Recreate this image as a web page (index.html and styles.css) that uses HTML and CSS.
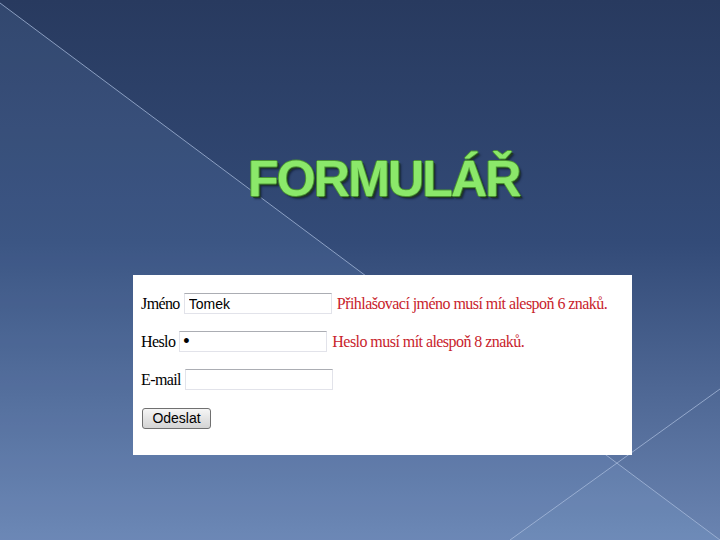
FILE: index.html
```html
<!DOCTYPE html>
<html lang="cs">
<head>
<meta charset="utf-8">
<title>Formulář</title>
<link rel="stylesheet" href="styles.css">
</head>
<body>
<svg class="backdrop" width="720" height="540" viewBox="0 0 720 540" aria-hidden="true">
  <defs>
    <linearGradient id="bg" x1="0" y1="0" x2="0" y2="1">
      <stop offset="0" stop-color="#283a5f"/>
      <stop offset="0.45" stop-color="#334b78"/>
      <stop offset="1" stop-color="#6a84b1"/>
    </linearGradient>
  </defs>
  <rect width="720" height="540" fill="url(#bg)"/>
  <polygon points="0,3 720,540 0,540" fill="#7f9fd6" fill-opacity="0.13"/>
  <polygon points="617,463 510,540 720,540" fill="#9fb8e0" fill-opacity="0.06"/>
  <line x1="0" y1="3" x2="720" y2="540" stroke="#a9bcdc" stroke-opacity="0.75" stroke-width="1"/>
  <line x1="720" y1="389" x2="510" y2="540" stroke="#a9bcdc" stroke-opacity="0.75" stroke-width="1"/>
</svg>
<main class="slide">
  <h1 class="title">FORMULÁŘ</h1>
  <form class="card">
    <div class="row">
      <label class="lbl" for="jmeno">Jméno</label>
      <input class="field" id="jmeno" type="text" value="Tomek">
      <span class="err">Přihlašovací jméno musí mít alespoň 6 znaků.</span>
    </div>
    <div class="row">
      <label class="lbl" for="heslo">Heslo</label>
      <input class="field pass" id="heslo" type="password" value="x">
      <span class="err">Heslo musí mít alespoň 8 znaků.</span>
    </div>
    <div class="row">
      <label class="lbl" for="email">E-mail</label>
      <input class="field" id="email" type="text" value="">
    </div>
    <div class="row">
      <button class="btn" type="button">Odeslat</button>
    </div>
  </form>
</main>
</body>
</html>
```

FILE: styles.css
```css
html, body {
  margin: 0;
  padding: 0;
  width: 720px;
  height: 540px;
  overflow: hidden;
}

body {
  position: relative;
  background: #3d5584;
  font-family: "Liberation Serif", "Times New Roman", serif;
}

.backdrop {
  position: absolute;
  left: 0;
  top: 0;
  z-index: 0;
}

.slide {
  position: relative;
  z-index: 1;
  padding: 151px 0 0 133px;
  display: flex;
  flex-direction: column;
}

.title {
  margin: 0 0 0 115px;
  height: 56px;
  line-height: 56px;
  font-family: "Liberation Sans", Arial, sans-serif;
  font-weight: bold;
  font-size: 50px;
  letter-spacing: -1.8px;
  color: #8be86a;
  text-shadow:
    -1px 0 0 #4a9433,
    1px 0 0 #4a9433,
    0 -1px 0 #4a9433,
    0 1px 0 #4a9433,
    2px 2px 0 #203a24,
    3px 3px 2px rgba(10, 20, 40, 0.6);
}

.card {
  margin: 68px 0 0 0;
  width: 499px;
  height: 180px;
  box-sizing: border-box;
  background: #ffffff;
  padding: 18px 0 0 8px;
  display: flex;
  flex-direction: column;
  gap: 17px;
}

.row {
  display: flex;
  align-items: center;
  height: 21px;
  gap: 4px;
}

.lbl {
  font-size: 16px;
  letter-spacing: -0.6px;
  color: #000000;
}

.field {
  width: 148px;
  height: 21px;
  box-sizing: border-box;
  margin: 0;
  padding: 0 4px;
  font-family: "Liberation Sans", Arial, sans-serif;
  font-size: 14px;
  color: #000000;
  background: #ffffff;
  border: 1px solid #e2e3ea;
  border-top-color: #abadb3;
  border-radius: 0;
  outline: none;
}

.pass {
  font-size: 18px;
  padding: 0 3px;
}

.err {
  margin-left: 1px;
  font-size: 16px;
  letter-spacing: -0.55px;
  color: #c8232c;
  white-space: nowrap;
}

.btn {
  margin: 1px 0 0 1px;
  width: 69px;
  height: 21px;
  padding: 0;
  font-family: "Liberation Sans", Arial, sans-serif;
  font-size: 14px;
  color: #000000;
  background: linear-gradient(#f6f6f6, #e4e4e4 50%, #d4d4d4);
  border: 1px solid #707070;
  border-radius: 3px;
}
```
